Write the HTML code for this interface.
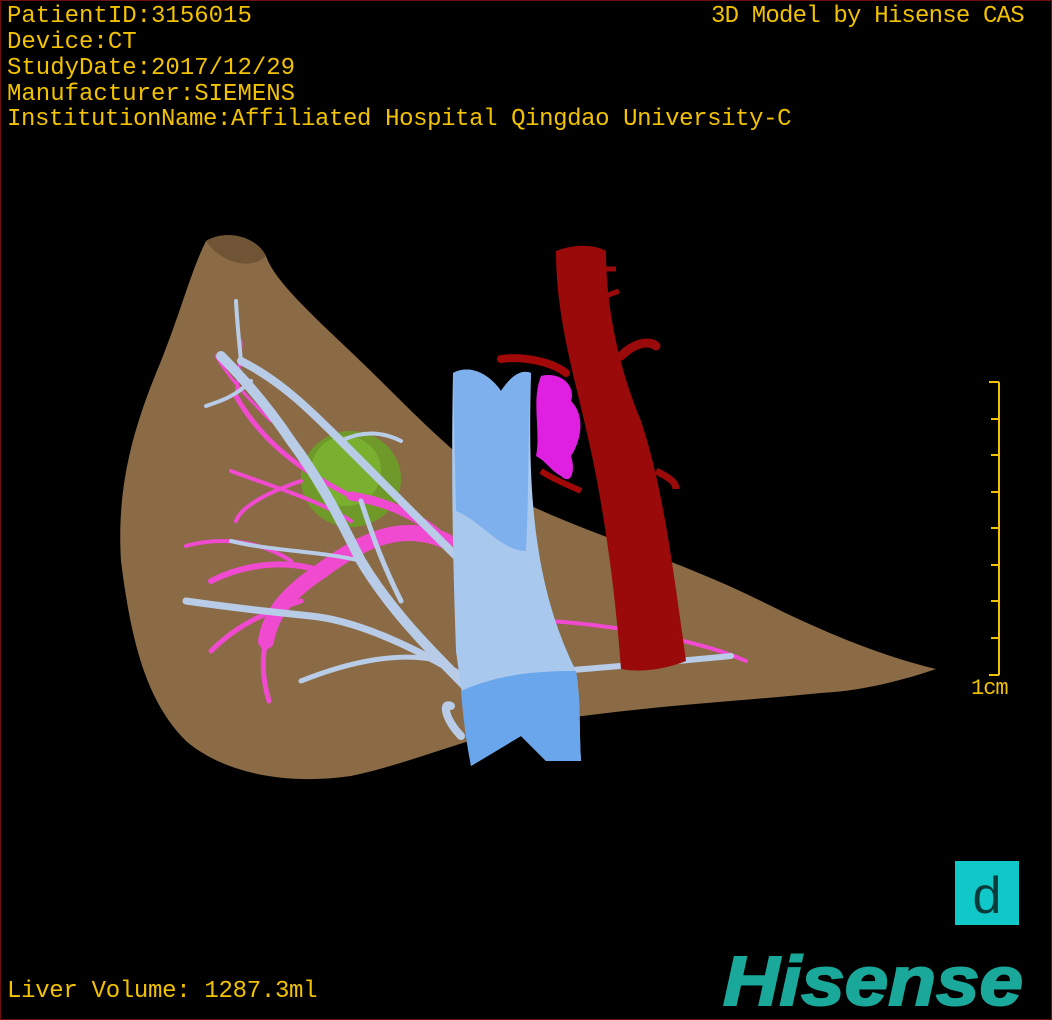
<!DOCTYPE html>
<html><head><style>
html,body{margin:0;padding:0;background:#000}
#w{position:relative;width:1050px;height:1018px;border:1px solid #6b0f0f;background:#000;overflow:hidden}
.t{position:absolute;font-family:"Liberation Mono",monospace;font-size:24px;color:#f2c200;white-space:pre;line-height:26px;letter-spacing:0px}
</style></head><body><div id="w">
<svg width="1050" height="1018" style="position:absolute;left:0;top:0">
<path d="M205 240 C225 228 255 235 265 255 C275 285 330 330 380 380 C420 420 470 470 520 500 C580 530 680 560 760 600 C820 630 880 655 935 668 C900 680 860 690 820 692 C740 700 650 705 560 718 C480 730 420 760 350 775 C280 785 220 770 185 740 C145 700 130 640 120 560 C115 480 135 420 160 360 C180 310 190 270 205 240Z" fill="#8a6b45"/>
<path d="M205 240 C225 228 255 235 265 255 C250 270 220 262 205 240Z" fill="#6f5535"/>
<ellipse cx="350" cy="478" rx="50" ry="48" fill="#6f9a2a"/>
<ellipse cx="345" cy="470" rx="35" ry="35" fill="#7ab030"/>
<g stroke="#f04ad0" fill="none" stroke-linecap="round">
<path d="M445 540 C400 520 360 540 320 570 C290 590 270 610 265 640" stroke-width="16"/>
<path d="M440 535 C410 510 380 500 350 495" stroke-width="9"/>
<path d="M320 570 C290 560 250 560 210 580" stroke-width="6"/>
<path d="M300 600 C270 610 240 620 210 650" stroke-width="5"/>
<path d="M265 640 C260 660 262 680 268 700" stroke-width="5"/>
<path d="M350 495 C300 470 260 440 235 395" stroke-width="5"/>
<path d="M235 395 C238 370 240 350 240 340" stroke-width="3"/>
<path d="M300 480 C270 490 240 505 235 520" stroke-width="4"/>
<path d="M290 560 C260 540 220 535 185 545" stroke-width="4"/>
<path d="M350 520 C320 500 270 485 230 470" stroke-width="4"/>
<path d="M270 420 C250 400 230 380 215 355" stroke-width="3"/>
<path d="M550 620 C620 625 700 640 745 660" stroke-width="4"/>
</g>
<g stroke="#b8cce8" fill="none" stroke-linecap="round">
<path d="M470 690 C430 650 390 610 360 560 C340 520 320 480 290 440 C270 410 245 380 220 355" stroke-width="10"/>
<path d="M460 560 C420 520 380 480 340 440 C310 410 280 380 240 360" stroke-width="8"/>
<path d="M470 680 C420 650 360 620 310 615 C260 610 220 605 185 600" stroke-width="7"/>
<path d="M440 660 C400 650 350 660 300 680" stroke-width="5"/>
<path d="M400 600 C380 560 370 530 360 500" stroke-width="5"/>
<path d="M360 560 C320 550 270 550 230 540" stroke-width="4"/>
<path d="M250 380 C235 395 220 400 205 405" stroke-width="4"/>
<path d="M240 360 C238 340 236 320 235 300" stroke-width="4"/>
<path d="M340 440 C360 430 380 430 400 440" stroke-width="4"/>
<path d="M450 705 C440 700 445 720 460 735" stroke-width="8"/>
<path d="M560 670 C620 665 680 660 730 655" stroke-width="6"/>
</g>
<path d="M452 372 C470 362 490 375 500 390 C510 375 520 368 530 372 C527 480 530 580 575 670 C580 700 578 730 580 760 L545 760 L520 735 L470 765 C465 720 462 700 455 650 C452 560 450 480 452 372Z" fill="#a9c8ee"/>
<path d="M452 372 C470 362 490 375 500 390 C510 375 520 368 530 372 C527 430 528 490 525 550 C500 550 480 520 455 510 Z" fill="#7fb0ee"/>
<path d="M460 690 C500 672 540 670 575 670 C580 700 578 730 580 760 L545 760 L520 735 L470 765 C465 740 462 715 460 690Z" fill="#6aa6ec"/>
<path d="M540 375 C560 370 575 385 570 400 C585 415 580 440 570 455 C575 470 570 485 560 475 C550 470 545 460 535 455 C540 430 530 400 540 375Z" fill="#e020e0"/>
<path d="M500 358 C520 355 550 360 565 372" stroke="#a30808" stroke-width="8" fill="none" stroke-linecap="round"/>
<path d="M540 470 C555 480 570 485 580 490" stroke="#a30808" stroke-width="6" fill="none"/>
<path d="M555 250 C575 242 595 244 605 250 C605 300 615 360 640 420 C660 480 670 550 685 660 C665 668 640 672 620 668 C615 600 605 520 590 450 C575 380 555 320 555 250Z" fill="#9a0a0a"/>
<path d="M620 355 C635 340 650 340 655 345" stroke="#9a0a0a" stroke-width="9" fill="none" stroke-linecap="round"/>
<path d="M655 470 C665 475 675 480 675 488" stroke="#9a0a0a" stroke-width="7" fill="none"/>
<path d="M605 268 L615 268 M605 295 L618 290" stroke="#9a0a0a" stroke-width="5"/>
<g stroke="#f2c200" stroke-width="2">
<line x1="998" y1="381" x2="998" y2="674"/>
<line x1="988" y1="381" x2="998" y2="381"/><line x1="990" y1="418" x2="998" y2="418"/><line x1="990" y1="454" x2="998" y2="454"/><line x1="990" y1="491" x2="998" y2="491"/><line x1="990" y1="527" x2="998" y2="527"/><line x1="990" y1="564" x2="998" y2="564"/><line x1="990" y1="600" x2="998" y2="600"/><line x1="990" y1="637" x2="998" y2="637"/><line x1="988" y1="674" x2="998" y2="674"/>
</g>
<rect x="954" y="860" width="64" height="64" fill="#10c8c8"/>
<text x="986" y="912" text-anchor="middle" font-family="Liberation Sans,sans-serif" font-size="52" fill="#0a3a3a">d</text>
<text x="1022" y="1004" text-anchor="end" font-family="Liberation Sans,sans-serif" font-weight="bold" font-style="italic" font-size="70" fill="#1aa89a" stroke="#1aa89a" stroke-width="2" textLength="300" lengthAdjust="spacingAndGlyphs">Hisense</text>
</svg>
<div class="t" style="left:6px;top:3px">PatientID:3156015
Device:CT
StudyDate:2017/12/29
Manufacturer:SIEMENS</div>
<div class="t" style="left:6px;top:106px;letter-spacing:-0.4px">InstitutionName:Affiliated Hospital Qingdao University-C</div>
<div class="t" style="left:710px;top:3px;letter-spacing:-0.8px">3D Model by Hisense CAS</div>
<div class="t" style="left:970px;top:675px;font-size:22px;letter-spacing:-1px">1cm</div>
<div class="t" style="left:6px;top:978px;letter-spacing:-0.3px">Liver Volume: 1287.3ml</div>
</div></body></html>
